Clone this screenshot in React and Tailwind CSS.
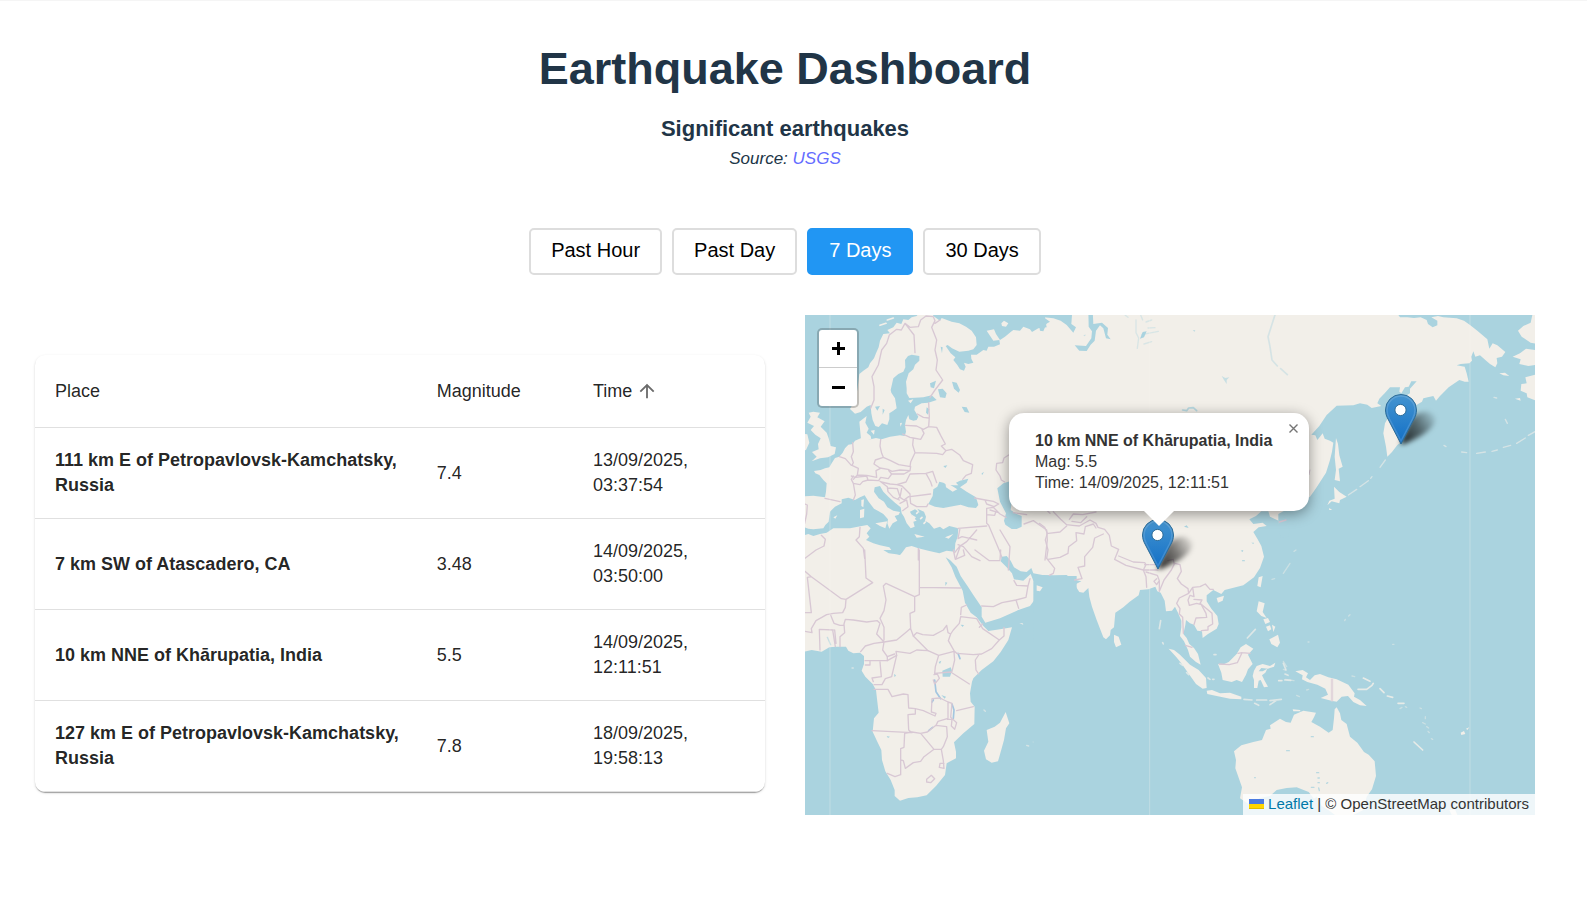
import React, { useState } from "react";

const QUAKES = [
  { place: "111 km E of Petropavlovsk-Kamchatsky, Russia", mag: "7.4", date: "13/09/2025,", time: "03:37:54" },
  { place: "7 km SW of Atascadero, CA", mag: "3.48", date: "14/09/2025,", time: "03:50:00" },
  { place: "10 km NNE of Khārupatia, India", mag: "5.5", date: "14/09/2025,", time: "12:11:51" },
  { place: "127 km E of Petropavlovsk-Kamchatsky, Russia", mag: "7.8", date: "18/09/2025,", time: "19:58:13" },
];

const PERIODS = ["Past Hour", "Past Day", "7 Days", "30 Days"];

const SEA = "#aad3df";
const LAND = "#f2efe9";
const BORDER = "#d8c8d4";

function Marker({ x, y }) {
  return (
    <g transform={`translate(${x} ${y})`}>
      <path d="M-1 0 L10 -26 Q26 -38 34 -27 Q37 -14 3 0Z" fill="url(#shadowFill)" filter="url(#pinShadow)" />
      <path
        d="M0 0 L-12.500 -24 C-14.500 -27.500 -15.500 -30.500 -15.500 -34 A15.500 15.500 0 0 1 15.500 -34 C15.500 -30.500 14.500 -27.500 12.500 -24 Z"
        fill="url(#pinFill)"
        stroke="#2e6c97"
        strokeWidth="1"
      />
      <path
        d="M0 -3 L-11.500 -25 C-13.500 -28.500 -14 -31 -14 -34 A14 14 0 0 1 14 -34 C14 -31 13.500 -28.500 11.500 -25 Z"
        fill="none"
        stroke="#fff"
        strokeOpacity=".14"
        strokeWidth="1.500"
      />
      <circle cx="-.5" cy="-34" r="5.600" fill="#fff" stroke="#2e6c97" strokeWidth="1" />
    </g>
  );
}

function WorldMap() {
  return (
    <svg className="absolute inset-0 h-full w-full" viewBox="0 0 730 500" preserveAspectRatio="xMidYMid slice" aria-hidden="true">
      <defs>
        <linearGradient id="pinFill" x1="0" y1="0" x2="0" y2="1">
          <stop offset="0" stopColor="#4494d0" />
          <stop offset="1" stopColor="#126fc6" />
        </linearGradient>
        <linearGradient id="shadowFill" gradientUnits="userSpaceOnUse" x1="2" y1="-4" x2="36" y2="-26">
          <stop offset="0" stopColor="#000" stopOpacity=".8" />
          <stop offset=".5" stopColor="#000" stopOpacity=".5" />
          <stop offset="1" stopColor="#000" stopOpacity=".05" />
        </linearGradient>
        <filter id="pinShadow" x="-50%" y="-50%" width="200%" height="200%">
          <feGaussianBlur stdDeviation="2.500" />
        </filter>
      </defs>
      <rect width="730" height="500" fill={LAND} />
      <g transform="scale(.333333)" strokeLinejoin="round" strokeLinecap="round">
        {/* Europe: Atlantic, Baltic, Barents, Mediterranean, Black and Caspian seas */}
        <g transform="translate(-15 -15)">
          <g fill={SEA}>
            <path d="M0 0H365L350 18 335 22 325 30 310 28 304 42 290 38 280 52 262 60 270 70 250 72 240 92 236 112 228 130 222 145 210 160 205 172 190 182 178 192 172 240 160 280 150 297 165 311 182 306 200 290 212 285 214 310 218 330 226 348 236 351 246 340 262 345 268 328 268 310 280 302 290 295 285 265 274 248 272 240 280 205 295 192 310 185 316 172 315 150 324 138 335 134 358 138 358 152 345 164 340 178 326 190 318 215 320 235 320 250 328 264 345 263 370 262 395 256 410 270 385 278 365 280 345 290 343 300 355 320 350 330 340 332 328 328 325 315 318 330 315 345 318 365 314 378 300 376 270 380 245 388 228 384 212 388 195 386 182 385 165 392 158 402 145 404 135 415 128 428 118 440 105 444 95 460 88 472 75 475 62 480 42 483 46 490 58 495 70 510 80 520 78 545 75 562 40 557 0 560Z" />
            <path d="M395 0 400 18 420 32 425 24 455 35 478 40 498 50 515 62 528 82 530 105 520 118 505 122 478 125 456 115 443 105 437 108 452 130 466 142 460 150 472 165 480 178 492 182 497 170 492 158 505 162 520 158 514 146 513 134 530 134 550 120 560 122 565 110 582 110 600 103 598 90 580 92 572 80 560 62 582 58 588 72 600 90 615 80 632 66 640 60 660 62 670 50 690 58 696 66 715 55 740 52 738 42 750 35 735 25 738 0Z" />
            <path d="M0 648 25 656 40 658 70 655 76 645 86 635 90 605 105 590 125 580 125 568 145 563 165 570 180 562 194 556 205 574 222 596 236 604 250 612 264 628 262 640 268 656 278 640 292 632 284 618 296 614 300 606 280 602 262 592 252 575 236 565 222 545 224 532 240 528 250 545 265 560 285 578 302 592 305 610 312 620 320 640 332 655 344 650 340 635 350 632 336 618 330 605 345 598 360 608 352 596 372 605 378 620 375 632 388 640 402 656 420 650 430 658 448 648 475 655 473 680 466 700 464 725 440 722 418 730 385 722 355 715 335 708 318 712 306 728 300 735 280 728 268 712 240 706 220 700 198 690 208 680 200 670 212 655 202 645 185 648 150 655 100 655 80 668 60 672 40 678 25 672 0 680Z" />
            <path d="M385 582 398 558 400 538 412 530 418 515 430 518 442 525 462 526 475 526 468 518 480 512 505 506 500 518 490 525 480 532 500 545 528 562 535 585 528 594 505 592 482 584 450 590 430 594 405 590Z" />
            <path d="M592 535 610 520 635 512 650 520 640 540 632 600 650 612 665 618 665 650 650 657 635 657 616 644 612 632 618 610 600 575 596 555Z" />
            <path d="M414 238 428 236 440 250 436 264 420 262ZM456 215 470 218 480 240 476 248 462 236ZM485 290 500 292 508 308 494 306ZM380 292 388 298 384 314 378 308ZM225 290 240 288 232 302ZM248 296 254 300 248 314ZM390 220 408 212 402 235 392 232ZM422 110 428 112 426 130ZM545 490 552 486 546 496ZM430 468 442 466 436 474Z" />
          </g>
          <g fill={LAND}>
            <path d="M40 305 60 308 52 322 74 334 62 350 80 368 86 385 92 408 108 412 104 432 84 442 60 445 35 454 50 440 36 426 56 418 54 402 62 385 46 374 32 360 42 348 22 338 32 320 26 308Z" />
            <path d="M0 370 22 373 28 398 18 420 0 425ZM178 335 200 318 196 338 206 356 200 368 212 378 214 388 183 388ZM212 362 224 360 222 374ZM300 340 306 338 302 350Z" />
            <path d="M436 518 450 524 472 538 458 545 438 532ZM226 640 262 634 256 655 240 648ZM180 600 193 596 192 622 180 625ZM184 570 192 568 190 592 184 588ZM343 672 374 680 350 683ZM435 682 460 672 446 686ZM604 40 612 32 625 40 618 50 606 48ZM324 272 340 268 332 280ZM100 622 112 616 106 626ZM332 612 348 622 342 630Z" />
            <path d="M350 610 354 606M362 626 366 622M372 640 376 636M240 46 258 40M262 30 280 24" stroke={LAND} strokeWidth="5" fill="none" />
          </g>
          <g fill="none" stroke={BORDER} strokeWidth="4">
            <path d="M212 295 222 270 222 230 216 200 235 165 245 120 260 100 268 75 290 58 304 60 315 40 330 52 355 50 362 30 378 18 400 20 405 32 395 52 410 90 405 120 412 150 408 180 428 210 405 240 390 262M315 40 342 75 345 128M405 40 420 30M386 278 388 320 386 350M352 312 370 322 386 324M316 346 350 348 370 358 386 350 410 352 422 376 436 402 424 408 438 422 428 434 410 430 345 428M308 372 330 382 340 384 362 388 372 370 366 358M340 384 338 405 345 428 332 456 330 470M438 422 455 418 480 436 490 452 518 464 514 490 498 496 488 508" />
            <path d="M242 388 240 408 245 430 250 442 272 452 296 464 332 470 330 482 300 480 276 484 264 478 240 474 222 462 226 450 250 442M330 482 312 492 275 492 266 482M158 398 160 425 154 440 160 458 156 466 175 475 172 495 200 496 230 502 228 482 240 476M118 440 136 446 154 466M154 498 166 502 200 498 204 510 188 515 180 524 160 520 154 508 160 498M172 495 160 508M160 520 166 555 160 570M204 510 236 512 242 502 265 506 275 492M244 516 270 522 290 524 318 516 330 492 378 490 392 516 396 528M240 514 262 530 264 545 280 562 298 570M262 534 292 536 300 560 294 566M290 524 306 528 330 552 330 560 392 552M305 535 300 562 312 570 326 560M330 560 332 580 350 590 380 590 384 582M300 580 320 570 324 590 308 602M378 490 398 484 410 518M75 565 120 575M15 582 22 585 20 612 14 640" />
            <path d="M524 564 556 570 580 574 596 582 582 590 560 582 555 570M560 595 580 592 600 612 618 622M560 595 560 640 566 646 600 726 608 750M474 655 560 648M480 655 474 686 486 680 530 690M464 728 478 710 500 695 530 660M474 704 490 710 515 740 540 752M480 710 468 745M672 642 700 632 740 660 742 690 735 750M626 435 612 444 608 458 590 460 588 480 600 498 604 510 614 516M355 715V750M180 652 178 680 168 690 190 715 194 745M64 676 76 688 72 708 48 720 15 745M570 600 596 608M560 614 584 616 588 604" />
          </g>
        </g>

        {/* Arctic coast of Siberia */}
        <g transform="translate(705 -15)">
          <g fill={SEA}>
            <path d="M-10 0 -5 30 0 62 10 64 20 40 12 22 40 25 62 32 80 45 100 68 108 52 94 42 96 15 90 0ZM145 0 146 50 156 64 154 85 138 108 104 106 118 122 140 123 152 104 164 92 168 62 180 46 190 55 198 85 212 88 202 74 204 54 186 38 160 42 158 0ZM300 86 308 66 320 64 312 82Z" />
            <path d="M545 198 556 204 568 202 560 210 560 222 552 210ZM458 60 466 60 464 66ZM130 75 138 74 134 79Z" opacity=".6" />
            <path d="M428 300 440 302 446 294 460 293 470 302" fill="none" stroke={SEA} strokeWidth="5" opacity=".8" />
            <path d="M710 0 700 30 684 80 690 110 696 150 712 168M722 176 742 194" fill="none" stroke={SEA} strokeWidth="5" opacity=".4" />
            <path d="M288 30 288 68 296 84 292 115M318 36 335 30M305 74 355 64M312 102 335 95M302 15 308 30M255 15 264 22M324 54 345 53" fill="none" stroke={SEA} strokeWidth="4" opacity=".35" />
          </g>
        </g>

        {/* North Pacific */}
        <g transform="translate(1455 -15)">
          <path fill={SEA} d="M315 0 330 22 352 22 372 24 392 22 410 30 414 42 428 52 442 46 442 32 424 22 444 18 460 22 500 25 522 32 540 45 562 62 592 88 598 116 608 100 622 106 646 126 636 140 620 144 622 160 616 172 600 162 586 150 570 136 556 140 550 124 544 140 546 152 538 160 512 162 500 166 524 170 530 190 536 215 524 215 508 210 476 232 450 258 438 272 430 258 400 265 396 275 370 290 350 310 335 395 322 405 306 426 292 440 288 410 280 370 285 340 296 320 312 290 340 262 360 250 360 236 380 214 364 214 356 230 345 232 334 250 328 245 330 232 300 232 284 250 268 266 262 280 274 288 245 294 232 284 210 280 190 286 140 287 110 315 88 348 64 374 76 376 82 390 90 380 98 370 104 386 120 392 130 398 126 425 120 450 108 488 78 535 60 560 -35 612V760H760V0Z" />
          <g fill={LAND}>
            <path d="M760 0 727 15 722 38 700 48 684 62 695 80 722 98 760 105ZM668 140 690 130 708 116 760 124V162L715 168 688 162 692 148ZM760 185 732 195 706 202 710 220 694 222 692 242 710 250 712 262 760 280ZM628 190 645 188 658 198 640 196ZM675 266 690 264 692 272Z" />
            <path d="M138 384 144 402 148 436 158 470 146 476 150 514 134 510 138 480 134 440 136 410ZM132 530 148 546 170 560 150 570 148 580 125 574 112 586 118 572 134 566ZM118 594 132 604 130 630 118 640 120 660 106 668 94 688 74 690 60 692 50 684 34 694 12 692 36 676 70 672 78 662 100 648 114 632ZM4 700 24 700 22 718 14 732 8 722ZM34 700 56 694 48 706Z" />
            <path d="M175 555 200 538M210 530 235 512M242 505 246 500M270 472 286 450M735 365 715 376M706 384 680 400M662 406 640 412M622 420 606 424M586 426 560 430M530 428 515 426M468 410 462 406M612 262 620 264M646 328 652 340" fill="none" stroke={LAND} strokeWidth="4" opacity=".6" />
            <path d="M60 480 57 494" stroke={BORDER} strokeWidth="3" />
          </g>
        </g>

        {/* Africa, Arabia */}
        <g transform="translate(-15 705)">
          <g fill={SEA}>
            <path d="M0 308 35 300 65 305 88 292 110 290 138 290 145 302 160 310 180 308 192 318 192 342 185 362 196 380 218 402 228 420 232 455 236 488 222 505 218 545 232 575 244 600 246 630 256 664 272 690 284 720 284 738 300 752 325 744 352 742 380 736 408 708 435 675 440 640 468 625 468 605 462 577 490 550 523 522 524 470 512 455 510 430 516 395 520 385 545 360 580 334 602 306 625 270 636 232 600 238 565 243 550 228 530 202 512 188 495 158 488 122 466 80 455 52 437 22 450 30 470 50 482 78 505 112 520 135 545 172 545 200 556 218 600 205 655 180 690 168 705 148 728 112 722 100 700 92 692 72 670 92 642 88 636 70 620 52 602 34 606 20 620 18 632 32 642 52 662 64 680 66 694 54 700 70 730 76 760 78H830V900H0Z" />
            <path d="M427 362 452 352 456 362 450 380 428 380ZM482 224 492 225 488 231ZM416 336 424 332 420 342ZM424 435 438 440 434 446ZM260 558 270 560 264 564ZM282 372 288 376 284 382ZM436 96 442 98 436 108ZM250 0 266 10 300 14 304 0Z" />
            <path d="M404 390 408 425 422 446M456 462 462 480 460 505M474 310 480 326M386 542 398 532M396 456 400 450" fill="none" stroke="#a3c6e0" strokeWidth="5" />
            <path d="M82 262 92 284" fill="none" stroke={SEA} strokeWidth="4" opacity=".6" />
          </g>
          <path fill={LAND} d="M617 486 628 520 618 535 612 570 598 620 594 634 575 638 558 628 552 602 565 575 560 540 584 530 600 518ZM658 220 668 220 670 224Z" />
          <path d="M680 586 686 588M700 576 705 578M552 480 556 484M156 354 160 354" stroke={LAND} strokeWidth="4" opacity=".6" />
          <g fill="none" stroke={BORDER} strokeWidth="4">
            <path d="M15 64 34 80 124 146 138 148 218 98 198 84 194 0M34 80 22 82 34 188H15M138 148 136 172 128 188 100 190 80 194 48 212 34 236 36 248 15 244M358 0 358 112 482 114M358 112 358 134 344 140 258 100 250 108 258 150 252 182 240 205 252 232 252 270M344 140 344 184 330 190 332 235 320 245 290 270 252 276 230 252 240 220 232 212 200 216 160 210 136 208 132 222 134 248 120 260 120 290M100 240 58 238 60 300M98 240 106 290M104 240 108 280M92 196 102 220 120 226 130 226M252 276 222 280 196 288 182 305M252 276 248 300 262 320 262 332 290 316 288 304 330 310 350 300 384 302 340 258 332 236" />
            <path d="M340 258 350 248 368 254 400 256 430 240 440 226 444 248 452 252 445 272 462 302 470 310 520 314 545 312 575 296 598 270 548 236 530 206 482 200 478 220 460 240 452 252M384 302 416 316 462 304M598 270 612 258V232M538 312 526 330 528 360 536 372M416 316 406 350 404 370 452 366 508 402M462 306 464 330 456 364M262 320 284 312M262 332H195M290 316 282 350 275 380 256 386 246 404 222 404M196 345H210V332M240 336 244 380 216 384 220 395M222 418 264 418 276 440 310 432 324 434 326 474 346 476 346 492 324 494 326 540 336 548 216 542M346 476 370 482 405 498 408 490 394 486 396 446 420 444 444 456 444 505 414 514 408 526 382 546 362 550 336 546 314 550 312 592 302 596V674L285 680 262 670M444 456 456 460 452 502 470 518 464 538 454 528 456 508 442 508M470 482 520 470M408 526 440 530 442 560 430 590 424 598 402 598 362 550M402 598 372 620 362 634 340 638 316 655 310 632 302 630M424 598 430 632 432 655 418 652 420 640 432 640M380 688 394 676 404 686 392 698 380 696ZM402 374 412 372 418 385 404 402 400 390M545 168 580 170 606 158 648 150 678 142 684 108 690 86M648 150 656 175M684 108 650 106 642 92M525 0 568 32 600 32M600 30 602 0M482 194 484 172 500 165M538 232 548 222M490 0 494 16 466 28 460 0" />
          </g>
        </g>

        {/* Indian Ocean, South-East Asia */}
        <g transform="translate(705 585)">
          <path fill={SEA} d="M-20 194 40 196 80 195 96 208 124 214 104 224 118 246 130 248 145 234 148 260 156 290 170 330 190 382 198 388 210 376 212 360 222 352 226 308 250 292 268 276 296 256 300 240 325 238 346 230 352 244 362 248 374 272 378 304 396 302 405 290 414 308 424 332 424 352 420 378 432 394 444 420 450 440 468 456 482 464 474 432 462 414 448 402 440 384 430 372 436 345 438 330 450 340 462 344 472 362 486 364 488 384 504 372 530 356 536 342 532 318 514 296 500 274 500 256 520 240 544 252 554 240 610 226 642 202 660 174 672 140 664 108 652 86 640 66 656 52 680 48 668 38 640 42 628 28 648 18 664 4 685 4 690 20 716 32 718 60 722 84 744 80 750 60 740 34 728 18 742 0H1500V930H-20Z" />
          <g fill={LAND}>
            <path d="M222 374 236 380 244 404 228 412 222 396ZM530 264 552 257 548 272 534 278ZM656 202 668 198 662 232 652 228ZM656 274 674 280 668 306 680 324 664 318 650 304ZM688 388 714 374 720 398 712 412 694 402ZM670 328 684 324 690 336 676 342ZM678 350 690 346 694 358 684 364ZM696 344 706 350 700 366ZM-10 226 8 232 0 244-10 242Z" />
            <path d="M386 416 402 420 420 434 450 464 476 480 498 504 500 534 488 536 468 522 444 488 424 460 408 440ZM500 542 516 540 540 550 570 548 604 560 604 568 570 566 530 558 502 552ZM534 462 548 464 566 456 590 432 602 412 618 402 640 416 624 434 638 462 624 478 618 494 606 516 590 510 575 516 548 510 544 488Z" />
            <path d="M642 482 650 468 668 462 690 468 706 458 702 470 684 476 664 474 656 484 668 484 682 476 676 488 666 496 674 512 684 530 672 532 662 510 656 512 652 534 642 534 642 510 638 498Z" />
            <path d="M612 568 636 570M650 570 680 570M690 572 724 568M644 580 656 586M690 584 708 572M622 384 646 358M730 460 738 480M735 492 744 496M716 512 726 512M734 510 752 511M420 460 428 466M440 488 446 494M504 504 510 508M518 508 522 508M362 332 358 356M368 398 370 402M522 434 528 434" fill="none" stroke={LAND} strokeWidth="5" opacity=".7" />
          </g>
          <path fill={SEA} d="M432 50 440 46 446 54ZM634 98 642 98 640 102ZM602 122 610 120 608 126Z" />
          <g fill="none" stroke={BORDER} strokeWidth="4">
            <path d="M-120 60-90 110-95 180M-2 40 14 52 22 70 16 90 24 120 20 145 44 175 40 190 28 196M24 148 60 142 84 130 86 110 110 92 108 68 132 72 136 50 160 42 168 54M40 5 62 28 80 44 98 46 118 48 150 30 168 40 174 52 194 58 208 76 214 108 236 118 224 148 258 166 310 180 318 164 314 158 280 156 236 138M190 72 164 84 158 112 134 140 134 168 114 172 126 206 104 210M25 70 60 66 80 48M88 28 100 12 128 14 168 6M96 34 122 38 140 20M22 2 30 10M310 180 354 180M314 164 344 164M310 180 318 200 320 232M318 186 352 196 358 212 350 224 342 214 350 206M358 212 358 244M358 244 372 210 394 180 404 160 420 164 424 184 412 206 424 222 444 236 446 250 418 264 410 280 420 296 418 312 428 322 430 370M446 250 458 232 480 230 496 222 510 238 520 238M458 232 462 260 450 256 444 270 448 286 470 280 484 284 498 310 500 322 468 324 462 344M462 268 486 270 480 280 500 296 516 310 518 342 504 350 504 360 484 362M384 152 400 148 402 160M436 406 456 412M538 462 568 464 592 458 606 428 594 430M606 428 630 430M-80 8-40 14M718 36 738 30" />
          </g>
        </g>

        {/* Australia, New Guinea and Pacific islands */}
        <g transform="translate(1245 705)">
          <g fill={LAND}>
            <path d="M42 604 64 586 100 576 126 570 138 540 152 536 150 526 180 506 198 516 212 518 222 494 250 482 288 488 282 502 274 516 300 530 326 548 338 540 342 505 344 478 350 472 360 490 364 510 380 522 390 560 412 578 432 606 446 614 464 634 468 678 456 718 440 740 430 780 400 795 345 795 325 780 305 768 290 740 282 746 266 726 230 712 200 714 170 720 150 738 120 744 90 765 60 745 66 712 46 655 48 630Z" />
            <path d="M226 364 248 360 264 370 258 382 270 390 284 376 300 372 325 382 350 388 385 404 404 430 402 440 420 450 440 468 420 466 400 456 384 438 365 440 350 455 334 452 302 444 324 434 316 416 292 404 262 396 246 388 248 376ZM218 478 240 480 242 484 220 484ZM722 548 732 543 736 552 724 555ZM738 536 748 532 742 540ZM688 780 705 778 712 795H695Z" />
            <path d="M414 418 440 418 456 406 460 400M430 384 450 394M480 416 492 428M502 438 518 442M534 460 552 460M582 576 608 600" fill="none" stroke={LAND} strokeWidth="5" opacity=".85" />
            <path d="M190 334 200 350M190 358 196 360M176 392 184 392M196 388 222 392M260 420 266 418M238 440 230 436M608 518 616 522M620 530 626 534M624 544 628 548M634 566 638 568M600 474 604 476M540 476 546 472M556 470 560 472M616 500 616 506M396 378 404 380M374 212 376 208M386 198 390 194M190 70 210 40M222 4 228 0M156 88 164 86M264 276 267 276M518 283 522 283" fill="none" stroke={LAND} strokeWidth="4" opacity=".45" />
          </g>
          <path d="M336 386V454" stroke="#e2d6db" strokeWidth="7" strokeLinecap="butt" />
          <path d="M200 602 208 602M274 560 280 560M290 668 296 668M294 684 298 684M294 698 298 698M274 712 282 712M296 714 298 722M104 683 106 683M320 700 323 698M68 32 73 32" fill="none" stroke={SEA} strokeWidth="4" opacity=".8" />
        </g>

        {/* Tile seams */}
        <path d="M75 0V1500M1034 0V1500M1995 0V1500" stroke="#f5f4ee" strokeWidth="3" opacity=".3" />
      </g>

      <Marker x={596} y={129} />
      <Marker x={353} y={254} />
    </svg>
  );
}

export default function App() {
  const [period, setPeriod] = useState("7 Days");
  const [popupOpen, setPopupOpen] = useState(true);

  return (
    <main className="min-h-screen border-t border-[#f5f5f5] bg-white pr-[52px] pb-20 pl-[35px] font-['Liberation_Sans',Arial,sans-serif] text-[#213547]">
      <header className="pt-10 text-center">
        <h1 className="text-[45px] leading-[56px] font-bold">Earthquake Dashboard</h1>
        <h2 className="mt-4 text-[22px] leading-8 font-bold">Significant earthquakes</h2>
        <p className="text-[17px] leading-7 italic">
          Source: <a href="#usgs" className="text-[#646cff]">USGS</a>
        </p>
      </header>

      <nav aria-label="Time period" className="mt-[55px] flex flex-wrap justify-center gap-[10px]">
        {PERIODS.map((p) => (
          <button
            key={p}
            type="button"
            aria-pressed={p === period}
            onClick={() => setPeriod(p)}
            className={
              p === period
                ? "rounded-[5px] border-2 border-[#2196f3] bg-[#2196f3] px-5 pt-[9px] pb-[11px] text-xl leading-[23px] text-white"
                : "rounded-[5px] border-2 border-[#ddd] bg-white px-5 pt-[9px] pb-[11px] text-xl leading-[23px] text-black"
            }
          >
            {p}
          </button>
        ))}
      </nav>

      <div className="mt-10 grid grid-cols-2 gap-10">
        <section className="mt-10 self-start overflow-hidden rounded-[10px] bg-white shadow-[0_2px_1px_-1px_rgba(0,0,0,0.2),0_1px_1px_0_rgba(0,0,0,0.14),0_1px_3px_0_rgba(0,0,0,0.12)]">
          <table className="w-full table-fixed border-collapse text-left text-lg leading-[25px] text-black/87">
            <colgroup>
              <col className="w-[52.3%]" />
              <col className="w-[21.4%]" />
              <col className="w-[26.3%]" />
            </colgroup>
            <thead>
              <tr className="border-b border-[#e0e0e0] leading-6">
                <th scope="col" className="px-5 py-6 font-normal">Place</th>
                <th scope="col" className="px-5 py-6 font-normal">Magnitude</th>
                <th scope="col" aria-sort="ascending" className="px-5 py-6 font-normal">
                  <button type="button" className="flex items-center gap-1">
                    Time
                    <svg className="h-[22px] w-[22px]" viewBox="0 0 24 24" fill="#6b6b6b" aria-hidden="true">
                      <path d="M4 12l1.410 1.410L11 7.830V20h2V7.830l5.580 5.590L20 12l-8-8-8 8z" />
                    </svg>
                  </button>
                </th>
              </tr>
            </thead>
            <tbody>
              {QUAKES.map((q) => (
                <tr key={q.place} className="border-b border-[#e0e0e0]">
                  <th scope="row" className="py-5 pl-5 font-bold">{q.place}</th>
                  <td className="px-5 py-5">{q.mag}</td>
                  <td className="px-5 py-5">
                    {q.date}
                    <br />
                    {q.time}
                  </td>
                </tr>
              ))}
            </tbody>
          </table>
        </section>

        <section aria-label="Map" className="relative h-[500px] overflow-hidden">
          <WorldMap />

          <div className="absolute top-[13px] left-3 flex flex-col overflow-hidden rounded-[5px] border-2 border-black/20 bg-white bg-clip-padding">
            <button type="button" aria-label="Zoom in" className="flex h-[38px] w-[38px] items-center justify-center border-b border-[#ccc]">
              <svg className="h-[13px] w-[13px]" viewBox="0 0 13 13" aria-hidden="true">
                <path d="M0 6.500H13M6.500 0V13" stroke="#000" strokeWidth="3" />
              </svg>
            </button>
            <button type="button" aria-label="Zoom out" className="flex h-[38px] w-[38px] items-center justify-center">
              <svg className="h-[13px] w-[13px]" viewBox="0 0 13 13" aria-hidden="true">
                <path d="M0 6.500H13" stroke="#000" strokeWidth="3" />
              </svg>
            </button>
          </div>

          {popupOpen && (
            <div className="absolute top-[98px] left-[204px] w-[300px]">
              <div className="relative rounded-[15px] bg-white pt-[17px] pb-[18px] pl-[26px] text-base leading-[21px] text-[#333] shadow-[0_3px_14px_rgba(0,0,0,0.4)]">
                <p className="font-bold whitespace-nowrap">10 km NNE of Khārupatia, India</p>
                <p>Mag: 5.5</p>
                <p>Time: 14/09/2025, 12:11:51</p>
                <button
                  type="button"
                  aria-label="Close popup"
                  onClick={() => setPopupOpen(false)}
                  className="absolute top-0 right-0 flex h-[30px] w-8 items-center justify-center"
                >
                  <svg className="h-[9px] w-[9px]" viewBox="0 0 9 9" aria-hidden="true">
                    <path d="M.5 .5l8 8M8.500 .5l-8 8" stroke="#757575" strokeWidth="1.400" />
                  </svg>
                </button>
              </div>
              <svg className="relative mx-auto h-[15px] w-[30px]" viewBox="0 0 30 15" aria-hidden="true">
                <path d="M0 0H30L15 15Z" fill="#fff" />
              </svg>
            </div>
          )}

          <div className="absolute right-0 bottom-0 flex items-center bg-white/80 px-[6px] pb-px text-[15px] leading-5 text-[#333]">
            <a href="#leaflet" className="flex items-center gap-1 text-[#0078a8]">
              <svg className="h-[10px] w-[15px]" viewBox="0 0 15 10" aria-hidden="true">
                <path fill="#4c7be1" d="M0 0h15v5H0z" />
                <path fill="#ffd500" d="M0 5h15v4H0z" />
                <path fill="#e0bc00" d="M0 9h15v1H0z" />
              </svg>
              Leaflet
            </a>
            <span className="whitespace-pre"> | © OpenStreetMap contributors</span>
          </div>
        </section>
      </div>
    </main>
  );
}
